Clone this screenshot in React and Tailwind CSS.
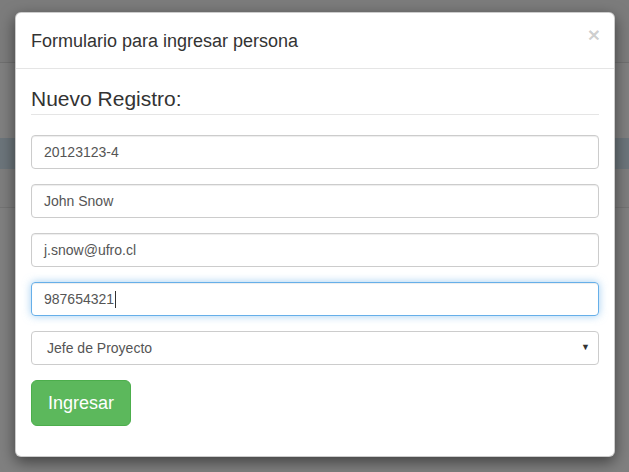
export default function App() {
  const fields = ["20123123-4", "John Snow", "j.snow@ufro.cl"];

  return (
    <div className="relative min-h-[472px] w-full overflow-hidden bg-[#808080] font-['Liberation_Sans',Arial,sans-serif]">
      {/* page behind the backdrop */}
      <div className="h-[63px] border-b border-[#707070] bg-[#7c7c7c]" />
      <div className="h-[75px]" />
      <div className="h-[31px] bg-[#6c757b]" />
      <div className="h-[39px] border-b border-[#747474] bg-[#7e7e7e]" />

      {/* modal */}
      <div className="absolute left-[15px] top-[12px] w-[600px] rounded-[6px] border border-black/20 bg-white shadow-[0_5px_15px_rgba(0,0,0,0.5)]">
        <div className="relative flex h-[56px] items-center border-b border-[#e5e5e5] px-[15px]">
          <h4 className="text-[18px] font-medium leading-[26px] text-[#333]">Formulario para ingresar persona</h4>
          <span className="absolute right-[14px] top-[11px] text-[21px] font-bold leading-none text-black/20">×</span>
        </div>
        <div className="p-[15px]">
          <div className="mb-[20px] border-b border-[#e5e5e5] text-[21px] leading-[30px] text-[#333]">Nuevo Registro:</div>
          <div className="flex flex-col gap-[15px]">
            {fields.map((f) => (
              <div key={f} className="flex h-[34px] items-center rounded-[4px] border border-[#ccc] px-[12px] text-[14px] text-[#555] shadow-[inset_0_1px_1px_rgba(0,0,0,0.075)]">
                {f}
              </div>
            ))}
            <div className="flex h-[34px] items-center rounded-[4px] border border-[#66afe9] px-[12px] text-[14px] text-[#555] shadow-[inset_0_1px_1px_rgba(0,0,0,0.075),0_0_8px_rgba(102,175,233,0.6)]">
              987654321
              <span className="ml-[1px] inline-block h-[17px] w-px bg-[#333]" />
            </div>
            <div className="flex h-[34px] items-center justify-between rounded-[4px] border border-[#ccc] pl-[15px] pr-[8px] text-[14px] text-[#555]">
              <span>Jefe de Proyecto</span>
              <span className="text-[9px] text-[#333]">▼</span>
            </div>
            <div className="mb-[15px]">
              <button className="h-[46px] rounded-[6px] border border-[#4cae4c] bg-[#5cb85c] px-[16px] text-[18px] leading-[24px] text-white">
                Ingresar
              </button>
            </div>
          </div>
        </div>
      </div>
    </div>
  );
}
